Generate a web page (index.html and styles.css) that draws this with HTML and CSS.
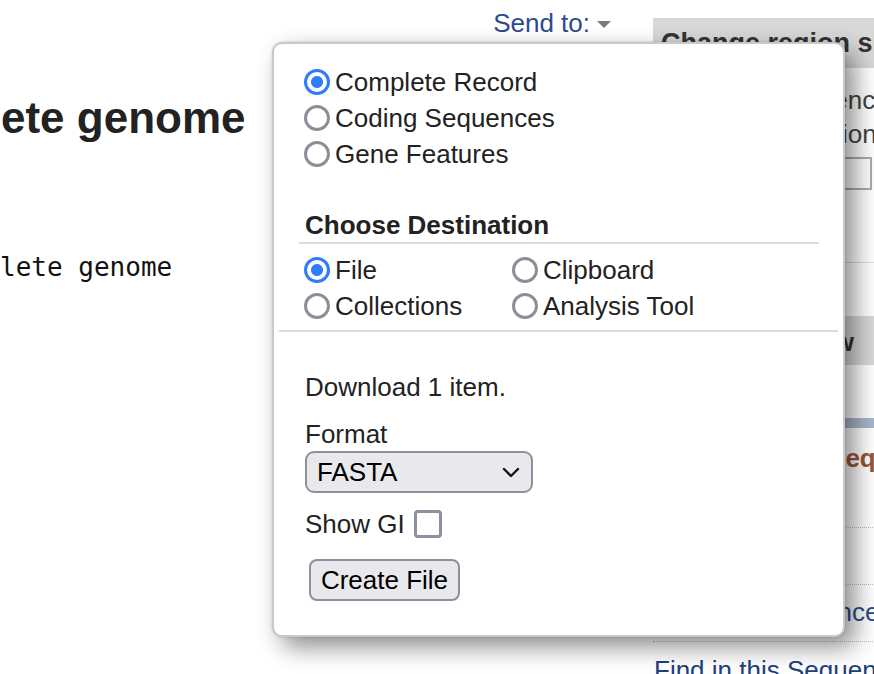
FILE: index.html
```html
<!DOCTYPE html>
<html lang="en">
<head>
<meta charset="utf-8">
<title>Send to</title>
<link rel="stylesheet" href="styles.css">
</head>
<body>
<div class="page">
  <div class="main">
    <div class="topbar">
      <a class="sendto" href="#">Send to:</a>
      <svg class="caret" width="14" height="8" viewBox="0 0 14 8"><path d="M0 0H14L7 7Z" fill="#7a7a7a"/></svg>
    </div>
    <h1 class="title">ete genome</h1>
    <div class="mono">lete genome</div>
  </div>
  <div class="side">
    <div class="portlet-head head1">Change region shown</div>
    <div class="portlet-body">
      <label class="side-row"><input type="radio" class="radio" name="reg" checked>Whole sequence</label>
      <label class="side-row"><input type="radio" class="radio" name="reg">Selected region</label>
      <div class="range"><input type="text" class="range-input"></div>
    </div>
    <div class="portlet-head head2">Customize view</div>
    <div class="bluebar"></div>
    <div class="analyze">Analyze this sequence</div>
    <ul class="links">
      <li class="first"><a href="#">Run BLAST</a></li>
      <li><a href="#">Pick Primers</a></li>
      <li><a href="#">Highlight Sequence Features</a></li>
      <li class="nob"><a href="#">Find in this Sequence</a></li>
    </ul>
  </div>
</div>

<div class="popup">
  <div class="sec1">
    <label class="row"><input type="radio" class="radio" name="rec" checked>Complete Record</label>
    <label class="row"><input type="radio" class="radio" name="rec">Coding Sequences</label>
    <label class="row"><input type="radio" class="radio" name="rec">Gene Features</label>
  </div>
  <h4 class="dest-head">Choose Destination</h4>
  <div class="dest-grid">
    <label class="row"><input type="radio" class="radio" name="dest" checked>File</label>
    <label class="row"><input type="radio" class="radio" name="dest">Clipboard</label>
    <label class="row"><input type="radio" class="radio" name="dest">Collections</label>
    <label class="row"><input type="radio" class="radio" name="dest">Analysis Tool</label>
  </div>
  <div class="sep"></div>
  <div class="sec3">
    <div class="dl">Download 1 item.</div>
    <div class="fmt-label">Format</div>
    <div class="select">
      <span>FASTA</span>
      <svg class="chev" width="18" height="11" viewBox="0 0 18 11"><path d="M2 2L9 9L16 2" fill="none" stroke="#111" stroke-width="2.4" stroke-linecap="round" stroke-linejoin="round"/></svg>
    </div>
    <label class="showgi">Show GI<input type="checkbox" class="check"></label>
    <button class="btn" type="button">Create File</button>
  </div>
</div>
</body>
</html>
```
FILE: styles.css
```css
html, body {
  margin: 0;
  padding: 0;
}
body {
  width: 874px;
  height: 674px;
  overflow: hidden;
  position: relative;
  background: #fff;
  font-family: "Liberation Sans", Arial, sans-serif;
  font-size: 26px;
  color: #222;
}
a {
  text-decoration: none;
}
.page {
  display: flex;
  align-items: flex-start;
}
.main {
  width: 653px;
  flex: none;
}
.topbar {
  display: flex;
  justify-content: flex-end;
  align-items: center;
  padding: 5px 42px 0 0;
  height: 36px;
  line-height: 36px;
}
.sendto {
  color: #2f4a8b;
}
.caret {
  margin-left: 7px;
  margin-top: 4px;
}
.title {
  margin: 52px 0 0 0;
  padding-left: 1px;
  font-size: 44px;
  line-height: 50px;
  font-weight: bold;
  color: #222;
  white-space: nowrap;
}
.mono {
  margin-top: 109px;
  font-family: "DejaVu Sans Mono", "Liberation Mono", monospace;
  font-size: 26px;
  line-height: 30px;
  color: #111;
  white-space: nowrap;
}
.side {
  width: 260px;
  flex: none;
  margin-top: 18px;
}
.portlet-head {
  background: #d8d8d8;
  padding: 7px 0 7px 8px;
  line-height: 36px;
  font-weight: bold;
  color: #333;
  white-space: nowrap;
}
.head1 {
  font-size: 27px;
}
.head2 {
  margin-top: 53px;
  padding: 8px 0 5px 6px;
}
.portlet-body {
  border-bottom: 1px solid #dcdcdc;
  padding-top: 15px;
  box-sizing: border-box;
  height: 195px;
}
.side-row {
  display: flex;
  align-items: center;
  height: 34px;
  padding-left: 12px;
  white-space: nowrap;
  color: #444;
}
.range {
  margin-top: 3px;
  padding-left: 100px;
}
.range-input {
  width: 119px;
  height: 33px;
  box-sizing: border-box;
  border: 2px solid #ababab;
  margin: 0;
  padding: 0;
  background: #fff;
}
.bluebar {
  margin-top: 53px;
  height: 10px;
  background: #a8b7cd;
}
.analyze {
  margin-top: 12px;
  padding-left: 19px;
  line-height: 36px;
  font-weight: bold;
  color: #985735;
  white-space: nowrap;
}
.links {
  list-style: none;
  margin: 0;
  padding: 0;
}
.links li {
  padding: 9px 0 11px 1px;
  line-height: 36px;
  border-bottom: 1px dotted #bdbdbd;
  white-space: nowrap;
}
.links li.first {
  padding-top: 4px;
}
.links li.nob {
  border-bottom: none;
  padding-top: 10px;
}
.links a {
  color: #2c4a8c;
}
.links li.nob a {
  color: #22407e;
}

/* popup */
.popup {
  position: absolute;
  left: 272px;
  top: 42px;
  width: 573px;
  height: 595px;
  box-sizing: border-box;
  background: #fff;
  border: 2px solid #c9c9c9;
  border-radius: 10px;
  box-shadow: 10px 10px 24px rgba(0, 0, 0, 0.45), 0 0 3px rgba(0, 0, 0, 0.15);
  z-index: 10;
}
.sec1 {
  padding: 20px 0 0 30px;
}
.row {
  display: flex;
  align-items: center;
  height: 36px;
  white-space: nowrap;
  color: #222;
}
.radio {
  appearance: none;
  -webkit-appearance: none;
  width: 26px;
  height: 26px;
  margin: 0 5px 0 0;
  border: 3px solid #8e8e98;
  border-radius: 50%;
  box-sizing: border-box;
  background: #fff;
  flex: none;
}
.radio:checked {
  border-color: #2f7cf6;
  background: radial-gradient(circle at center, #2f7cf6 0, #2f7cf6 5.5px, #fff 6.5px);
}
.dest-head {
  margin: 36px 24px 0 25px;
  padding-left: 6px;
  line-height: 34px;
  font-size: 26px;
  font-weight: bold;
  color: #222;
  border-bottom: 2px solid #dcdcdc;
}
.dest-grid {
  margin-top: 8px;
  padding-left: 30px;
  display: grid;
  grid-template-columns: 208px 208px;
}
.sep {
  margin: 6px 5px 0 5px;
  border-top: 2px solid #dcdcdc;
}
.sec3 {
  padding-left: 31px;
  display: flex;
  flex-direction: column;
  align-items: flex-start;
}
.dl {
  margin-top: 37px;
  line-height: 36px;
}
.fmt-label {
  margin-top: 14px;
  line-height: 30px;
}
.select {
  margin-top: 2px;
  width: 228px;
  height: 42px;
  box-sizing: border-box;
  border: 2px solid #8f8f9d;
  border-radius: 9px;
  background: #e9e9ed;
  display: flex;
  align-items: center;
  justify-content: space-between;
  padding: 0 11px 0 10px;
  color: #000;
}
.chev {
  margin-top: 1px;
}
.showgi {
  margin-top: 13px;
  height: 36px;
  display: flex;
  align-items: center;
  color: #222;
}
.check {
  appearance: none;
  -webkit-appearance: none;
  width: 28px;
  height: 28px;
  box-sizing: border-box;
  margin: 0 0 0 9px;
  border: 3px solid #8f8f9d;
  border-radius: 4px;
  background: #fff;
}
.btn {
  margin: 17px 0 0 4px;
  width: 151px;
  height: 42px;
  box-sizing: border-box;
  border: 2px solid #8f8f9d;
  border-radius: 8px;
  background: #e9e9ed;
  font-family: "Liberation Sans", Arial, sans-serif;
  font-size: 26px;
  color: #000;
  padding: 0;
}
```
